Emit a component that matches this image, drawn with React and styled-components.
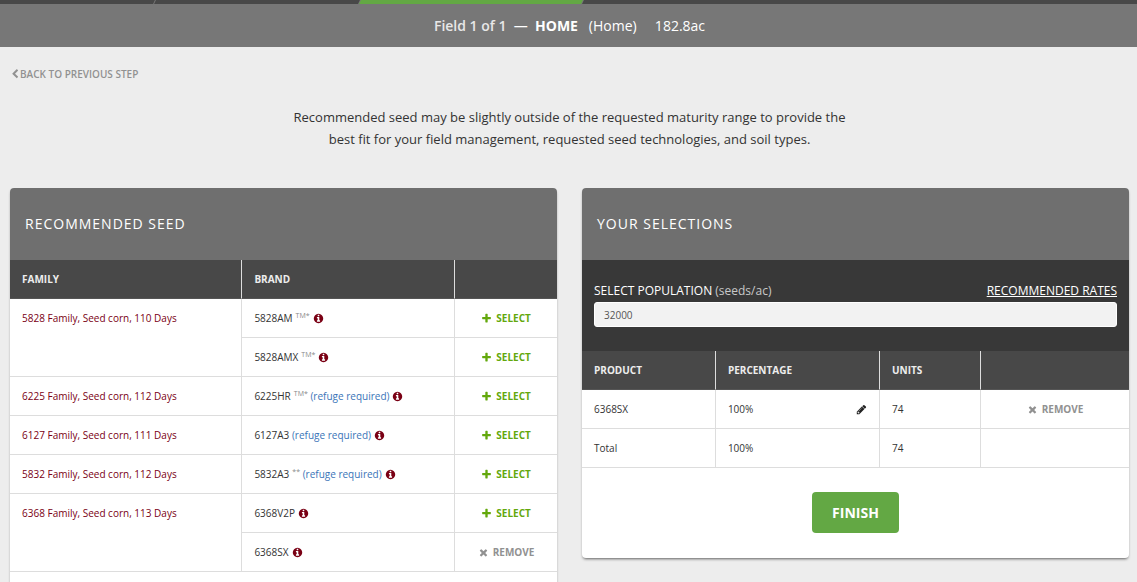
import { Fragment } from 'react'
import styled, { createGlobalStyle } from 'styled-components'

// #region styles
const GlobalStyle = createGlobalStyle`
  * {
    box-sizing: border-box;
  }

  body {
    margin: 0;
    background: #ededed;
    color: #333;
    font-family: 'Open Sans', sans-serif;
    font-size: 10px;
  }
`

const Steps = styled.div`
  display: flex;
  gap: 1px;
  height: 4px;
  overflow: hidden;
  background: #777;
`

const Step = styled.div`
  flex: ${({ $size }) => $size};
  background: ${({ $active }) => ($active ? '#63a844' : '#484848')};
  transform: skewX(-25deg);

  &:first-child {
    margin-left: -4px;
  }

  &:last-child {
    margin-right: -4px;
  }
`

const FieldBar = styled.header`
  display: flex;
  align-items: center;
  justify-content: center;
  height: 43px;
  padding-left: 2px;
  background: #777;
  color: #fff;
  font-size: 14px;
  white-space: pre;
`

const FieldCount = styled.span`
  color: #e8e8e8;
  font-weight: 600;
`

const Page = styled.main`
  padding: 20px 8px 24px 10px;
`

const BackLink = styled.a`
  display: inline-flex;
  align-items: center;
  height: 14px;
  color: #919191;
  font-size: 10px;
  font-weight: 600;
  text-decoration: none;
`

const Intro = styled.p`
  max-width: 570px;
  margin: 24px auto 38px;
  font-size: 13px;
  line-height: 22px;
  text-align: center;
`

const Columns = styled.div`
  display: grid;
  grid-template-columns: 1fr 1fr;
  align-items: start;
  gap: 25px;
`

const Panel = styled.section`
  overflow: hidden;
  border-radius: 4px;
  background: #fff;
  box-shadow: 0 2px 3px -1px rgba(0, 0, 0, 0.6);
`

const PanelTitle = styled.h2`
  margin: 0;
  padding: 0 15px;
  background: #6f6f6f;
  color: #fff;
  font-size: 14px;
  font-weight: 400;
  letter-spacing: 1px;
  line-height: 72px;
`

const Table = styled.table`
  width: 100%;
  border-collapse: separate;
  border-spacing: 0;
  table-layout: fixed;
`

const Th = styled.th`
  width: ${({ $width }) => $width};
  height: 39px;
  padding: 0 12px;
  border-bottom: 1px solid #555;
  background: #484848;
  color: #ededed;
  font-weight: 700;
  text-align: left;

  & + & {
    border-left: 1px solid #ddd;
  }
`

const Td = styled.td`
  height: 39px;
  padding: 12px 12px 0;
  border-bottom: 1px solid #ddd;
  border-left: ${({ $first }) => ($first ? '0' : '1px solid #ddd')};
  color: ${({ $family }) => ($family ? '#7a0014' : '#333')};
  line-height: 14px;
  text-align: ${({ $center }) => ($center ? 'center' : 'left')};
  vertical-align: top;
  white-space: nowrap;
`

const CellRow = styled.div`
  display: flex;
  align-items: center;
  justify-content: ${({ $spread }) => ($spread ? 'space-between' : 'flex-start')};
  gap: 3px;
`

const Mark = styled.sup`
  margin-left: 3px;
  color: #888;
  font-size: 7px;
  line-height: 0;
`

const Refuge = styled.a`
  color: #3a74b8;
  text-decoration: none;
`

const IconButton = styled.button`
  display: inline-flex;
  padding: 0;
  border: 0;
  background: none;
  color: ${({ $color }) => $color};
  cursor: pointer;
`

const ActionButton = styled.button`
  display: inline-flex;
  align-items: center;
  gap: 4px;
  padding: 0;
  border: 0;
  background: none;
  color: ${({ $remove }) => ($remove ? '#919191' : '#63a80c')};
  font: 700 10px/14px 'Open Sans', sans-serif;
  cursor: pointer;
`

const Population = styled.div`
  display: grid;
  grid-template-columns: 1fr auto;
  row-gap: 2px;
  padding: 22px 12px 24px;
  background: #383838;
  color: #fff;
  font-size: 12px;
  line-height: 18px;
`

const Unit = styled.span`
  color: #c8c8c8;
`

const RatesLink = styled.a`
  color: #fff;
`

const PopulationInput = styled.input`
  grid-column: 1 / -1;
  width: 100%;
  height: 25px;
  padding: 0 9px;
  border: 1px solid #fff;
  border-radius: 3px;
  background: #f2f2f2;
  color: #555;
  font: 400 10px 'Open Sans', sans-serif;
`

const Footer = styled.div`
  display: flex;
  justify-content: center;
  padding: 24px 0 25px;
`

const FinishButton = styled.button`
  height: 41px;
  padding: 0 20px;
  border: 0;
  border-radius: 4px;
  background: #63a844;
  color: #fff;
  font: 700 14px 'Open Sans', sans-serif;
  cursor: pointer;
`
// #endregion

const ICONS = {
  chevron:
    'M1427 301l-531 531 531 531q19 19 19 45t-19 45l-166 166q-19 19-45 19t-45-19l-742-742q-19-19-19-45t19-45l742-742q19-19 45-19t45 19l166 166q19 19 19 45t-19 45z',
  plus: 'M1600 736v192q0 40-28 68t-68 28h-416v416q0 40-28 68t-68 28h-192q-40 0-68-28t-28-68v-416h-416q-40 0-68-28t-28-68v-192q0-40 28-68t68-28h416v-416q0-40 28-68t68-28h192q40 0 68 28t28 68v416h416q40 0 68 28t28 68z',
  times:
    'M1490 1322q0 40-28 68l-136 136q-28 28-68 28t-68-28l-294-294-294 294q-28 28-68 28t-68-28l-136-136q-28-28-28-68t28-68l294-294-294-294q-28-28-28-68t28-68l136-136q28-28 68-28t68 28l294 294 294-294q28-28 68-28t68 28l136 136q28 28 28 68t-28 68l-294 294 294 294q28 28 28 68z',
  info: 'M1152 1376v-160q0-14-9-23t-23-9h-96v-512q0-14-9-23t-23-9h-320q-14 0-23 9t-9 23v160q0 14 9 23t23 9h96v320h-96q-14 0-23 9t-9 23v160q0 14 9 23t23 9h448q14 0 23-9t9-23zm-128-896v-160q0-14-9-23t-23-9h-192q-14 0-23 9t-9 23v160q0 14 9 23t23 9h192q14 0 23-9t9-23zm640 416q0 209-103 385.5t-279.5 279.5-385.5 103-385.5-103-279.5-279.5-103-385.5 103-385.5 279.5-279.5 385.5-103 385.5 103 279.5 279.5 103 385.5z',
  pencil:
    'M491 1536l91-91-235-235-91 91v107h128v128h107zm523-928q0-22-22-22-10 0-17 7l-542 542q-7 7-7 17 0 22 22 22 10 0 17-7l542-542q7-7 7-17zm-54-192l416 416-832 832h-416v-416zm683 96q0 53-37 90l-166 166-416-416 166-165q36-38 90-38 53 0 91 38l235 234q37 39 37 91z',
}

const Icon = ({ name, size = 11 }) => (
  <svg width={size} height={size} viewBox="0 0 1792 1792" fill="currentColor" aria-hidden="true">
    <path d={ICONS[name]} />
  </svg>
)

const families = [
  {
    name: '5828 Family, Seed corn, 110 Days',
    brands: [
      { name: '5828AM', mark: 'TM*' },
      { name: '5828AMX', mark: 'TM*' },
    ],
  },
  {
    name: '6225 Family, Seed corn, 112 Days',
    brands: [{ name: '6225HR', mark: 'TM*', refuge: true }],
  },
  {
    name: '6127 Family, Seed corn, 111 Days',
    brands: [{ name: '6127A3', refuge: true }],
  },
  {
    name: '5832 Family, Seed corn, 112 Days',
    brands: [{ name: '5832A3', mark: '**', refuge: true }],
  },
  {
    name: '6368 Family, Seed corn, 113 Days',
    brands: [{ name: '6368V2P' }, { name: '6368SX', selected: true }],
  },
]

const Action = ({ remove }) => (
  <ActionButton type="button" $remove={remove}>
    <Icon name={remove ? 'times' : 'plus'} />
    {remove ? 'REMOVE' : 'SELECT'}
  </ActionButton>
)

const Brand = ({ brand }) => (
  <CellRow>
    <span>
      {brand.name}
      {brand.mark && <Mark>{brand.mark}</Mark>}
      {brand.refuge && (
        <>
          {' '}
          <Refuge href="#refuge">(refuge required)</Refuge>
        </>
      )}
    </span>
    <IconButton type="button" $color="#7a0014" aria-label={`About ${brand.name}`}>
      <Icon name="info" />
    </IconButton>
  </CellRow>
)

const RecommendedSeed = () => (
  <Panel>
    <PanelTitle>RECOMMENDED SEED</PanelTitle>
    <Table>
      <thead>
        <tr>
          <Th $width="42.3%">FAMILY</Th>
          <Th $width="38.9%">BRAND</Th>
          <Th />
        </tr>
      </thead>
      <tbody>
        {families.map((family) => (
          <Fragment key={family.name}>
            {family.brands.map((brand, index) => (
              <tr key={brand.name}>
                {index === 0 && (
                  <Td $first $family rowSpan={family.brands.length}>
                    {family.name}
                  </Td>
                )}
                <Td>
                  <Brand brand={brand} />
                </Td>
                <Td $center>
                  <Action remove={brand.selected} />
                </Td>
              </tr>
            ))}
          </Fragment>
        ))}
      </tbody>
    </Table>
    <Footer />
  </Panel>
)

const YourSelections = () => (
  <Panel>
    <PanelTitle>YOUR SELECTIONS</PanelTitle>
    <Population>
      <label htmlFor="population">
        SELECT POPULATION <Unit>(seeds/ac)</Unit>
      </label>
      <RatesLink href="#rates">RECOMMENDED RATES</RatesLink>
      <PopulationInput type="text" id="population" defaultValue="32000" />
    </Population>
    <Table>
      <thead>
        <tr>
          <Th $width="24.3%">PRODUCT</Th>
          <Th $width="30%">PERCENTAGE</Th>
          <Th $width="18.5%">UNITS</Th>
          <Th />
        </tr>
      </thead>
      <tbody>
        <tr>
          <Td $first>6368SX</Td>
          <Td>
            <CellRow $spread>
              100%
              <IconButton type="button" $color="#222" aria-label="Edit percentage">
                <Icon name="pencil" />
              </IconButton>
            </CellRow>
          </Td>
          <Td>74</Td>
          <Td $center>
            <Action remove />
          </Td>
        </tr>
        <tr>
          <Td $first>Total</Td>
          <Td>100%</Td>
          <Td>74</Td>
          <Td />
        </tr>
      </tbody>
    </Table>
    <Footer>
      <FinishButton type="button">FINISH</FinishButton>
    </Footer>
  </Panel>
)

export default function App() {
  return (
    <>
      <GlobalStyle />
      <Steps>
        <Step $size={158} />
        <Step $size={204} />
        <Step $size={222} $active />
        <Step $size={558} />
      </Steps>
      <FieldBar>
        <FieldCount>Field 1 of 1</FieldCount>
        <span>{'  —  '}</span>
        <strong>HOME</strong>
        <span>{'   (Home)     182.8ac'}</span>
      </FieldBar>
      <Page>
        <BackLink href="#back">
          <Icon name="chevron" size={10} />
          BACK TO PREVIOUS STEP
        </BackLink>
        <Intro>
          Recommended seed may be slightly outside of the requested maturity range to provide the
          best fit for your field management, requested seed technologies, and soil types.
        </Intro>
        <Columns>
          <RecommendedSeed />
          <YourSelections />
        </Columns>
      </Page>
    </>
  )
}
